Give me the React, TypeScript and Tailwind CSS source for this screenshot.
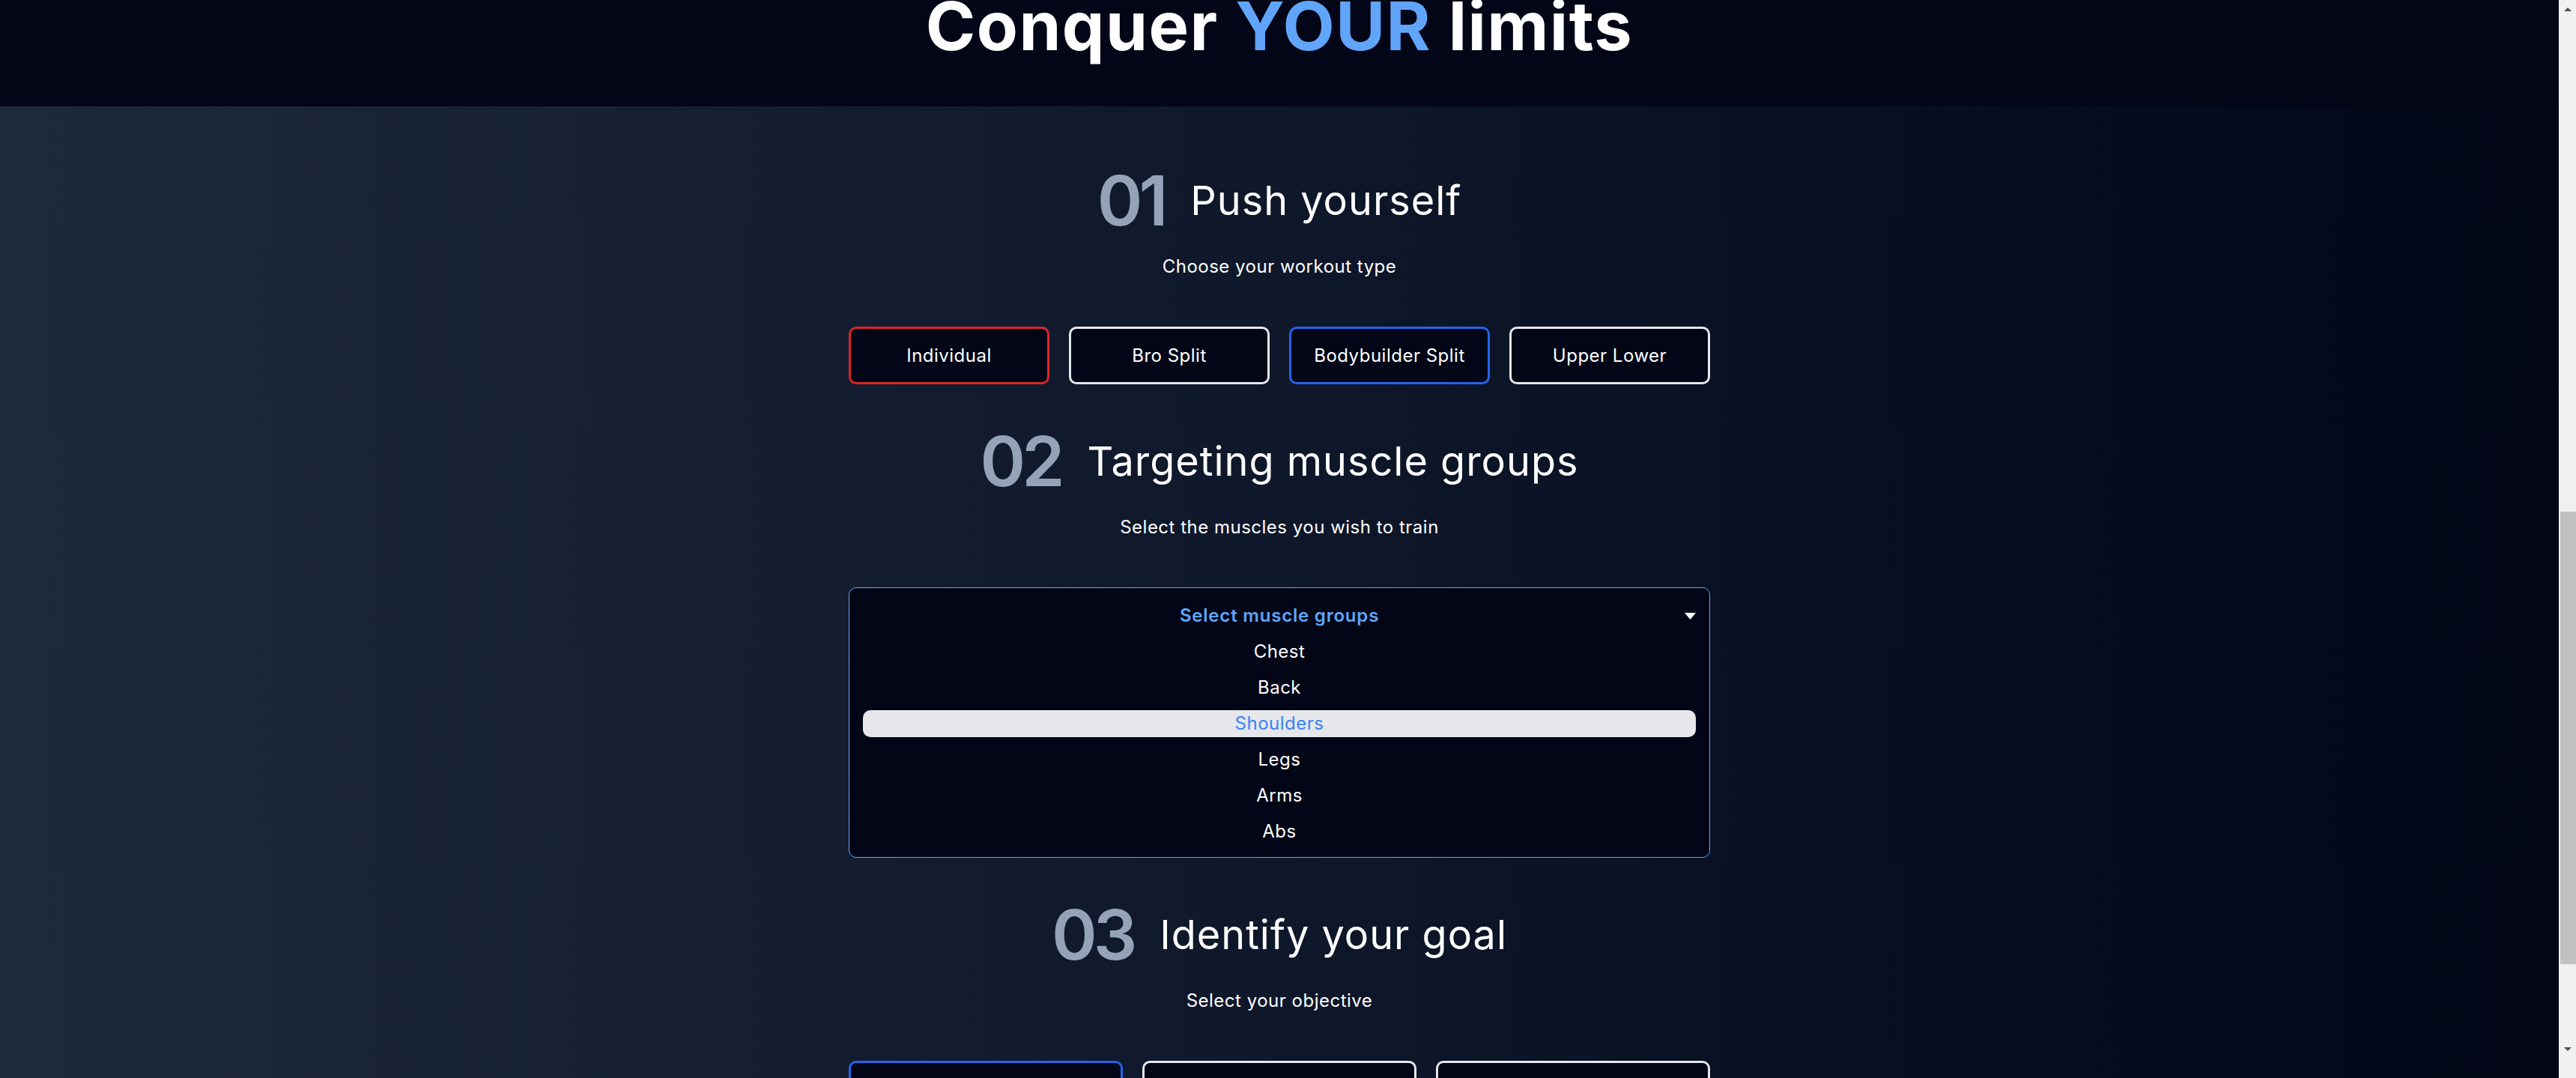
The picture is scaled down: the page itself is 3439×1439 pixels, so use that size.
import { useEffect, useRef, useState } from "react";

const workouts = [
  { label: "Individual", border: "border-[#dc2626]" },
  { label: "Bro Split", border: "border-[#e5e7eb]" },
  { label: "Bodybuilder Split", border: "border-[#2563eb]" },
  { label: "Upper Lower", border: "border-[#e5e7eb]" },
];

const muscles = ["Chest", "Back", "Shoulders", "Legs", "Arms", "Abs"];

const goals = [
  { label: "Strength Power", border: "border-[#2563eb]" },
  { label: "Growth Hypertrophy", border: "border-[#e5e7eb]" },
  { label: "Cardiovascular Endurance", border: "border-[#e5e7eb]" },
];

function SectionHeader({ index, title, desc }: { index: string; title: string; desc: string }) {
  return (
    <div className="flex flex-col items-center">
      <div className="flex items-center gap-[35px]">
        <span className="text-[92px] leading-none font-semibold tracking-[-5px] text-[#94a3b8]">{index}</span>
        <h2 className="text-[54px] leading-none tracking-[1px] text-white">{title}</h2>
      </div>
      <p className="mt-[26px] text-[24px] leading-8 tracking-[0.5px] text-white">{desc}</p>
    </div>
  );
}

function MuscleSelect() {
  return (
    <div className="mt-[64px] w-[1150px] rounded-[10px] border border-[#60a5fa] bg-[#020617] px-[18px] pt-[19px] pb-[16px] flex flex-col gap-[12px]">
      <div className="relative h-[36px] flex items-center justify-center">
        <span className="text-[24px] font-semibold tracking-[0.8px] text-[#60a5fa]">Select muscle groups</span>
        <svg className="absolute right-0 top-[14px]" width="15" height="9" viewBox="0 0 15 9">
          <polygon points="0,0 15,0 7.5,9" fill="white" />
        </svg>
      </div>
      {muscles.map((m) => (
        <div
          key={m}
          className={
            m === "Shoulders"
              ? "h-[36px] flex items-center justify-center rounded-[10px] bg-[#e5e7eb] text-[24px] tracking-[0.5px] text-[#3b82f6]"
              : "h-[36px] flex items-center justify-center rounded-[10px] text-[24px] tracking-[0.5px] text-white"
          }
        >
          {m}
        </div>
      ))}
    </div>
  );
}

export default function App() {
  const scrollRef = useRef<HTMLDivElement>(null);
  const heroRef = useRef<HTMLElement>(null);
  const trackRef = useRef<HTMLDivElement>(null);
  const [thumb, setThumb] = useState({ top: 0, height: 0 });

  const updateThumb = () => {
    const s = scrollRef.current;
    const t = trackRef.current;
    if (!s || !t) return;
    const trackH = t.clientHeight;
    setThumb({
      top: (trackH * s.scrollTop) / s.scrollHeight,
      height: (trackH * s.clientHeight) / s.scrollHeight,
    });
  };

  useEffect(() => {
    const s = scrollRef.current;
    const h = heroRef.current;
    if (s && h) s.scrollTop = h.offsetTop + h.offsetHeight - 142;
    updateThumb();
  }, []);

  return (
    <div className="h-screen flex font-['Inter',sans-serif]">
      <div
        ref={scrollRef}
        onScroll={updateThumb}
        className="flex-1 overflow-y-scroll [scrollbar-width:none] bg-linear-to-r from-[#1e293b] via-[#0f172a] to-[#020617]"
      >
        {/* hero */}
        <section ref={heroRef} className="bg-[#020617] pt-[1560px] pb-[62px] flex justify-center">
          <h1 className="text-[90px] leading-none font-bold tracking-[1.4px] text-white">
            Conquer <span className="text-[#60a5fa]">YOUR</span> limits
          </h1>
        </section>

        <main className="min-h-[1538px] pt-[80px] pb-[120px] flex flex-col items-center">
          {/* 01 */}
          <SectionHeader index="01" title="Push yourself" desc="Choose your workout type" />
          <div className="mt-[64px] flex gap-[26px]">
            {workouts.map((w) => (
              <button
                key={w.label}
                className={`w-[268px] h-[77px] rounded-[10px] border-[3px] ${w.border} bg-[#020617] text-[24px] tracking-[0.5px] text-white`}
              >
                {w.label}
              </button>
            ))}
          </div>

          {/* 02 */}
          <div className="mt-[57px]">
            <SectionHeader index="02" title="Targeting muscle groups" desc="Select the muscles you wish to train" />
          </div>
          <MuscleSelect />

          {/* 03 */}
          <div className="mt-[57px]">
            <SectionHeader index="03" title="Identify your goal" desc="Select your objective" />
          </div>
          <div className="mt-[64px] flex gap-[26px]">
            {goals.map((g) => (
              <button
                key={g.label}
                className={`w-[366px] h-[77px] rounded-[10px] border-[3px] ${g.border} bg-[#020617] text-[24px] tracking-[0.5px] text-white`}
              >
                {g.label}
              </button>
            ))}
          </div>
        </main>
      </div>

      {/* scrollbar */}
      <aside className="w-[23px] shrink-0 bg-[#f1f1f1] flex flex-col pb-[27px]">
        <div className="h-[24px] flex items-center justify-center">
          <svg width="10" height="5" viewBox="0 0 10 5">
            <polygon points="0,5 10,5 5,0" fill="#505050" />
          </svg>
        </div>
        <div ref={trackRef} className="flex-1 flex flex-col">
          <div className="ml-[2px] bg-[#c1c1c1]" style={{ marginTop: thumb.top, height: thumb.height }} />
        </div>
        <div className="h-[24px] flex items-center justify-center">
          <svg width="10" height="5" viewBox="0 0 10 5">
            <polygon points="0,0 10,0 5,5" fill="#505050" />
          </svg>
        </div>
      </aside>
    </div>
  );
}
